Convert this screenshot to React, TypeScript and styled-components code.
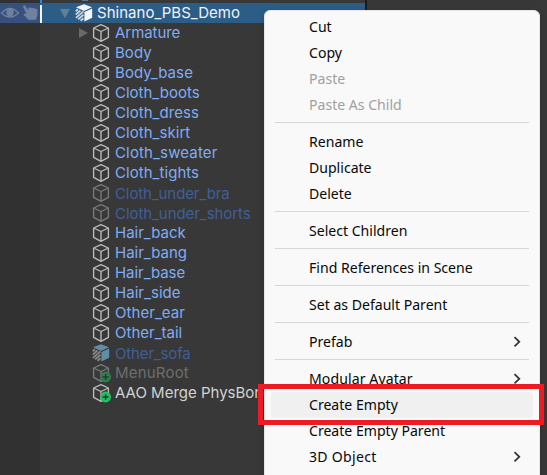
import React from "react";
import styled, { createGlobalStyle } from "styled-components";

const GlobalStyle = createGlobalStyle`
  * { box-sizing: border-box; }
  html, body { margin: 0; overflow: hidden; background: #383838; }
`;

const Window = styled.div`
  position: relative;
  width: 547px;
  height: 475px;
  overflow: hidden;
  background: #383838;
`;

const Hierarchy = styled.div`
  width: 365px;
  height: 475px;
  padding-top: 3px;
  background: linear-gradient(90deg, #313131 40px, #383838 40px);
`;

const Peek = styled.div`
  position: absolute;
  top: 0;
  left: 40px;
  width: 2px;
  height: 3px;
  background: #1e93d2;
`;

const PanelEdge = styled.div`
  position: absolute;
  top: 0;
  left: 365px;
  width: 2px;
  height: 10px;
  background: #1a1a1a;
`;

const PeekIcon = styled.div`
  position: absolute;
  top: 0;
  left: 82px;
  width: 6px;
  height: 1px;
  background: #567a8d;
`;

const TreeRow = styled.div<{ $selected?: boolean }>`
  display: flex;
  height: 20px;
  background: ${(p) => (p.$selected ? "#2c5d87" : "transparent")};
`;

const Gutter = styled.div<{ $selected?: boolean }>`
  display: flex;
  align-items: center;
  width: 42px;
  flex: none;
  background: ${(p) => (p.$selected ? "linear-gradient(90deg, #38507e 40px, transparent 40px)" : "none")};
`;

const Marker = styled.div`
  width: 2px;
  height: 18px;
  margin-top: 2px;
  background: #f4f6fa;
`;

const Arrow = styled.div<{ $root?: boolean }>`
  display: flex;
  align-items: center;
  justify-content: center;
  width: 14px;
  margin-left: ${(p) => (p.$root ? 16 : 34)}px;
  flex: none;
`;

const IconSlot = styled.div<{ $opacity?: number; $root?: boolean }>`
  display: flex;
  width: 18px;
  height: 20px;
  margin-left: ${(p) => (p.$root ? 3 : 2)}px;
  margin-right: ${(p) => (p.$root ? 4 : 5)}px;
  flex: none;
  opacity: ${(p) => p.$opacity ?? 1};

  svg { overflow: visible; }
`;

const Name = styled.span<{ $color: string; $spacing: number; $low?: boolean }>`
  padding-top: ${(p) => (p.$low ? 1 : 0)}px;
  font: 15px/20px Inter, sans-serif;
  letter-spacing: ${(p) => p.$spacing}px;
  color: ${(p) => p.$color};
  white-space: nowrap;
`;

const Menu = styled.div`
  position: absolute;
  left: 264px;
  top: 10px;
  width: 276px;
  height: 490px;
  padding: 3px 6px;
  background: #f9f9f9;
  border: 1px solid #e6e6e6;
  border-radius: 6px;
  box-shadow: 0 3px 7px rgba(0, 0, 0, 0.2);
`;

const MenuItem = styled.div<{ $disabled?: boolean; $active?: boolean }>`
  display: flex;
  align-items: center;
  justify-content: space-between;
  height: 26px;
  padding: 0 12px 0 38px;
  border-radius: 4px;
  background: ${(p) => (p.$active ? "#f0f0f0" : "transparent")};
  color: ${(p) => (p.$disabled ? "#a0a0a0" : "#080808")};
  font: 15px/24px "Noto Sans", sans-serif;
  white-space: nowrap;
`;

const MenuText = styled.span<{ $spacing: number }>`
  height: 26px;
  letter-spacing: ${(p) => p.$spacing}px;
  transform: scaleX(0.938);
  transform-origin: left center;
`;

const Separator = styled.div`
  height: 1px;
  margin: 4px 4px 6px;
  background: #d7d7d7;
`;

const Highlight = styled.div`
  position: absolute;
  left: 258px;
  top: 384px;
  width: 286px;
  height: 41px;
  border: 5px solid #ed1c24;
`;

const Cube = ({ added }: { added?: boolean }) => (
  <svg width="18" height="20" viewBox="0 0 18 20" fill="none">
    <path d="M9 1.7 16.4 5v9.4L9 18.3 1.6 14.4V5Z M1.6 5 9 8.5 16.4 5M9 8.5v9.6" stroke="#bcbcbc" strokeWidth="1.35" strokeLinejoin="round" />
    {added && (
      <>
        <circle cx="13.6" cy="14" r="5.4" fill="#1fc462" />
        <path d="M13.6 10.9v6.2M10.5 14h6.2" stroke="#2b3530" strokeWidth="1.4" />
      </>
    )}
  </svg>
);

const Prefab = ({ color, stripe }: { color: string; stripe: string }) => (
  <svg width="18" height="20" viewBox="0 0 18 20">
    <path d="M9 1.2 17 4.3 9 8 1 4.3Z" fill={color} />
    <path d="M9.4 9 17.2 5.5v9.2L9.4 18.6Z" fill={color} />
    <path d="M.8 8.2 3 6.2M.8 11.6 5.4 7.5M.9 14.9 8.5 8.4M3.1 16.4 8.5 11.8M5.6 17.7 8.5 15.2" stroke={stripe} strokeWidth="1.9" />
  </svg>
);

const Eye = () => (
  <svg width="20" height="20" viewBox="0 0 20 20" fill="none">
    <path d="M1.5 10Q10 1 18.5 10Q10 18 1.5 10Z" stroke="#70819f" strokeWidth="1.4" />
    <circle cx="10" cy="9.5" r="3.7" fill="#70819f" />
  </svg>
);

const Hand = () => (
  <svg width="20" height="20" viewBox="0 0 20 20">
    <path d="M3.4 2.5Q5 1.8 5.7 3.4L8.2 7.2V5q1.5-1.5 2.4.2 1.6-1.5 2.3.2 1.6-1.2 2.4.5 1.8-.8 2.1 1v5.6L15.9 16.8H8.5L3.4 11.7Q4 9.7 6.7 11L3.3 4.4Z" fill="#70819f" />
  </svg>
);

const Triangle = ({ down }: { down?: boolean }) => (
  <svg width="12" height="20" viewBox="0 0 12 20">
    <path d={down ? "M1 6H11L6 15Z" : "M2 5V15L11 10Z"} fill={down ? "#628199" : "#686868"} />
  </svg>
);

const Chevron = () => (
  <svg width="8" height="12" viewBox="0 0 8 12" fill="none">
    <path d="M1.5 1.2 6.3 5.8 1.5 10.4" stroke="#303030" strokeWidth="1.7" />
  </svg>
);

type Node = { name: string; kind?: "added" | "prefab"; opacity?: number; low?: boolean; color?: string; spacing?: number; expandable?: boolean };

const nodes: Node[] = [
  { name: "Armature", expandable: true, spacing: -0.05 },
  { name: "Body" },
  { name: "Body_base", spacing: 0.1 },
  { name: "Cloth_boots", spacing: 0 },
  { name: "Cloth_dress" },
  { name: "Cloth_skirt" },
  { name: "Cloth_sweater", spacing: 0.15 },
  { name: "Cloth_tights", spacing: 0.05 },
  { name: "Cloth_under_bra", opacity: 0.5, low: true, color: "#415f97", spacing: -0.1 },
  { name: "Cloth_under_shorts", opacity: 0.5, low: true, color: "#415f97", spacing: -0.06 },
  { name: "Hair_back", spacing: 0 },
  { name: "Hair_bang", spacing: 0 },
  { name: "Hair_base", spacing: -0.05 },
  { name: "Hair_side" },
  { name: "Other_ear" },
  { name: "Other_tail", spacing: 0 },
  { name: "Other_sofa", kind: "prefab", opacity: 0.65, low: true, color: "#415f97", spacing: -0.15 },
  { name: "MenuRoot", kind: "added", opacity: 0.5, color: "#6e6e6e", spacing: 0.2 },
  { name: "AAO Merge PhysBone", kind: "added", color: "#d2d2d2", spacing: 0 },
];

type Entry = { label: string; disabled?: boolean; submenu?: boolean; active?: boolean; spacing?: number };

const groups: Entry[][] = [
  [
    { label: "Cut" },
    { label: "Copy" },
    { label: "Paste", disabled: true },
    { label: "Paste As Child", disabled: true },
  ],
  [{ label: "Rename" }, { label: "Duplicate" }, { label: "Delete" }],
  [{ label: "Select Children" }],
  [{ label: "Find References in Scene" }],
  [{ label: "Set as Default Parent" }],
  [{ label: "Prefab", submenu: true }],
  [
    { label: "Modular Avatar", submenu: true, spacing: 0.1 },
    { label: "Create Empty", active: true },
    { label: "Create Empty Parent" },
    { label: "3D Object", submenu: true, spacing: 0.3 },
  ],
];

export default function App() {
  return (
    <Window>
      <GlobalStyle />
      <Hierarchy>
        <TreeRow $selected>
          <Gutter $selected>
            <Eye />
            <Hand />
            <Marker />
          </Gutter>
          <Arrow $root><Triangle down /></Arrow>
          <IconSlot $root><Prefab color="#f3f6f9" stripe="#c7d3de" /></IconSlot>
          <Name $color="#f0f4f8" $spacing={0.02}>Shinano_PBS_Demo</Name>
        </TreeRow>
        {nodes.map((n) => (
          <TreeRow key={n.name}>
            <Gutter />
            <Arrow>{n.expandable && <Triangle />}</Arrow>
            <IconSlot $opacity={n.opacity}>
              {n.kind === "prefab" ? <Prefab color="#76bce0" stripe="#b4b4b4" /> : <Cube added={n.kind === "added"} />}
            </IconSlot>
            <Name $color={n.color ?? "#7fadf5"} $spacing={n.spacing ?? 0.05} $low={n.low}>{n.name}</Name>
          </TreeRow>
        ))}
      </Hierarchy>
      <Peek />
      <PeekIcon />
      <PanelEdge />
      <Menu>
        {groups.map((group, i) => (
          <React.Fragment key={i}>
            {i > 0 && <Separator />}
            {group.map((e) => (
              <MenuItem key={e.label} $disabled={e.disabled} $active={e.active}>
                <MenuText $spacing={e.spacing ?? 0}>{e.label}</MenuText>
                {e.submenu && <Chevron />}
              </MenuItem>
            ))}
          </React.Fragment>
        ))}
      </Menu>
      <Highlight />
    </Window>
  );
}
